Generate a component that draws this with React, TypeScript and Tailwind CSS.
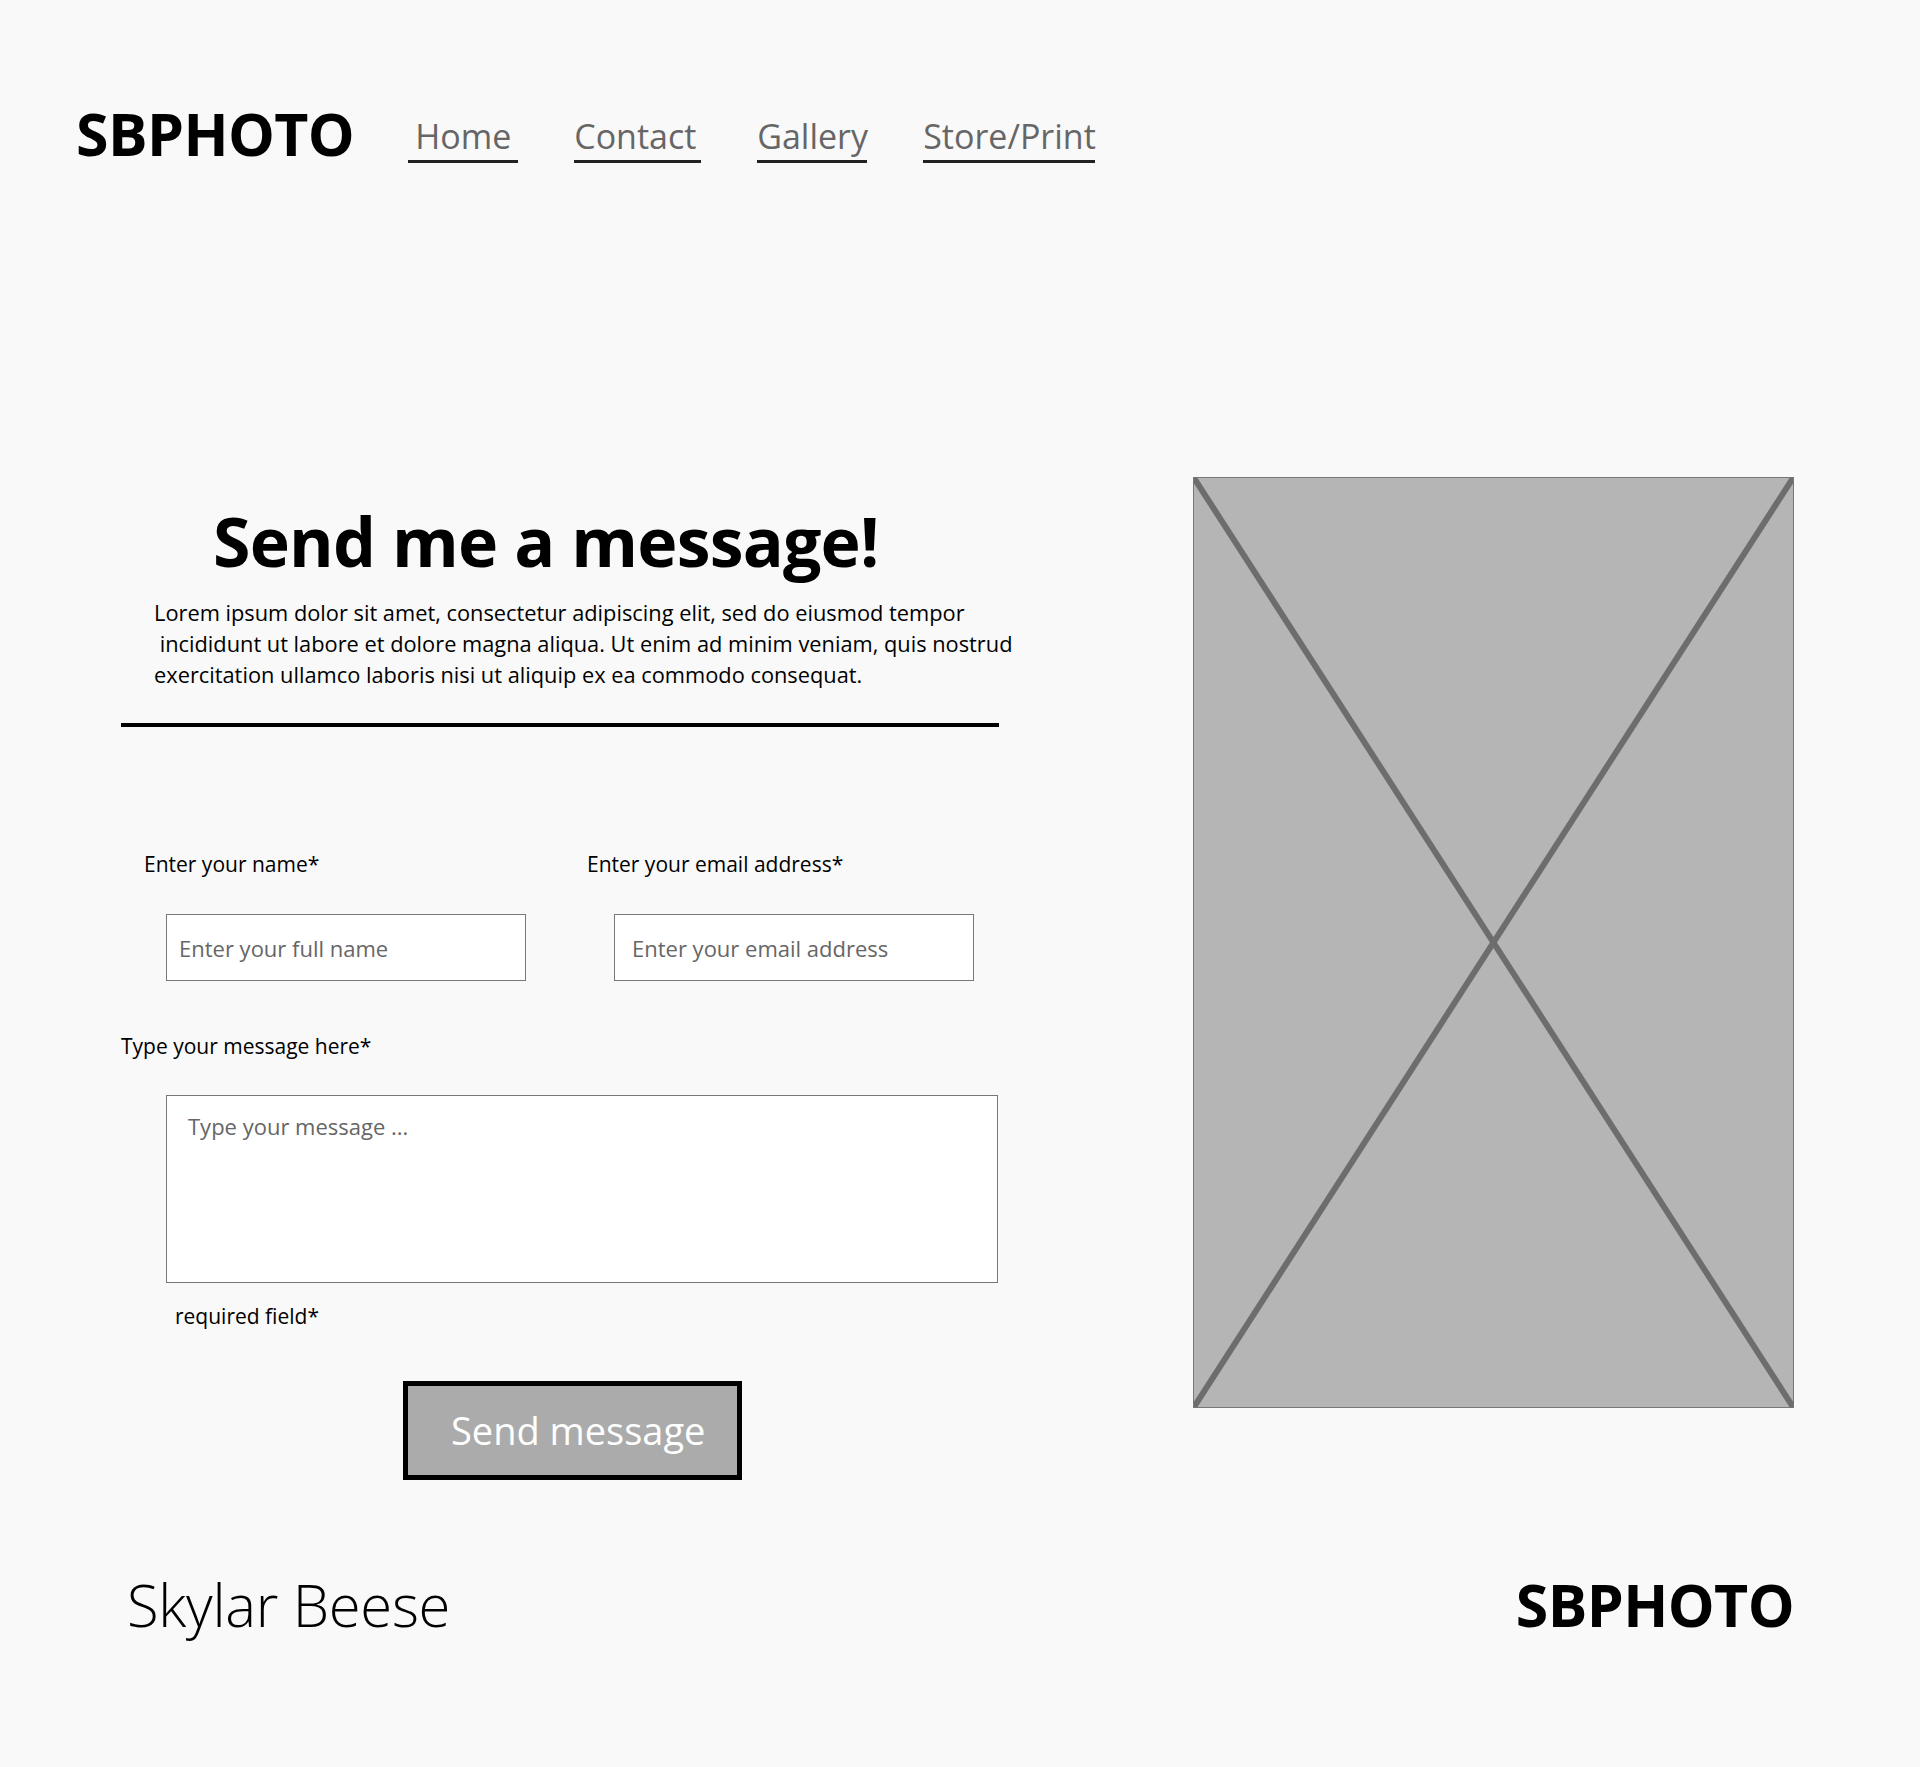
import React from "react";

const navLinks = [
  { label: "Home", w: "w-[110px]", pad: "pl-[7px]" },
  { label: "Contact", w: "w-[127px]", pad: "pl-0" },
  { label: "Gallery", w: "w-[110px]", pad: "pl-0" },
  { label: "Store/Print", w: "w-[172px]", pad: "pl-0" },
];

function Logo() {
  return (
    <span className="text-[59px] leading-none font-bold tracking-[-0.6px] text-black">SBPHOTO</span>
  );
}

export default function App() {
  return (
    <div className="min-h-[1767px] w-full bg-[#f9f9f9] font-['Open_Sans','Noto_Sans',sans-serif] text-black">
      {/* header */}
      <header className="flex items-end pt-[104px] pl-[76px]">
        <Logo />
        <nav className="flex gap-[56px] ml-[54px]">
          {navLinks.map((l) => (
            <a
              key={l.label}
              href="#"
              className={`${l.w} ${l.pad} block border-b-[3px] border-[#222] text-[34px] leading-[44px] text-[#666] pb-[2px]`}
            >
              {l.label}
            </a>
          ))}
        </nav>
      </header>

      {/* main */}
      <main className="flex items-start mt-[314px]">
        <section className="w-[1000px] pl-[121px]">
          <h1 className="pl-[92px] mt-[24px] text-[68px] leading-[80px] font-bold tracking-[-0.8px]">Send me a message!</h1>
          <p className="mt-[16px] pl-[33px] text-[21.8px] leading-[31px] whitespace-pre">
            {"Lorem ipsum dolor sit amet, consectetur adipiscing elit, sed do eiusmod tempor\n incididunt ut labore et dolore magna aliqua. Ut enim ad minim veniam, quis nostrud\nexercitation ullamco laboris nisi ut aliquip ex ea commodo consequat."}
          </p>
          <div className="mt-[33px] w-[878px] h-[4px] bg-black" />

          <form className="mt-[122px]">
            <div className="flex">
              <div className="w-[466px]">
                <label className="block pl-[23px] text-[21px] leading-[30px]">Enter your name*</label>
                <input
                  placeholder="Enter your full name"
                  className="mt-[35px] ml-[45px] w-[360px] h-[67px] border border-[#777] bg-white px-[12px] text-[22px] placeholder:text-[#666] outline-none"
                />
              </div>
              <div>
                <label className="block text-[21px] leading-[30px]">Enter your email address*</label>
                <input
                  placeholder="Enter your email address"
                  className="mt-[35px] ml-[27px] w-[360px] h-[67px] border border-[#777] bg-white px-[17px] text-[22px] placeholder:text-[#666] outline-none"
                />
              </div>
            </div>

            <label className="block mt-[50px] text-[21px] leading-[30px]">Type your message here*</label>
            <textarea
              placeholder="Type your message ..."
              className="block mt-[34px] ml-[45px] w-[832px] h-[188px] border border-[#777] bg-white px-[21px] py-[14px] text-[22px] placeholder:text-[#666] outline-none resize-none"
            />
            <p className="mt-[18px] ml-[54px] text-[21px] leading-[30px]">required field*</p>

            <button
              type="button"
              className="mt-[50px] ml-[282px] w-[339px] h-[99px] border-[5px] border-black bg-[#ababab] text-white text-[38px] pl-[43px] text-left"
            >
              Send message
            </button>
          </form>
        </section>

        {/* image placeholder */}
        <div className="ml-[193px] w-[601px] h-[931px] border border-[#777] bg-[#b5b5b5]">
          <svg className="w-full h-full" viewBox="0 0 601 931" preserveAspectRatio="none">
            <line x1="0" y1="0" x2="601" y2="931" stroke="#6d6d6d" strokeWidth="6" />
            <line x1="601" y1="0" x2="0" y2="931" stroke="#6d6d6d" strokeWidth="6" />
          </svg>
        </div>
      </main>

      {/* footer */}
      <footer className="flex items-end justify-between pl-[127px] pr-[126px] mt-[95px]">
        <span className="text-[58px] leading-none font-light tracking-[-0.3px] text-black">Skylar Beese</span>
        <Logo />
      </footer>
    </div>
  );
}
